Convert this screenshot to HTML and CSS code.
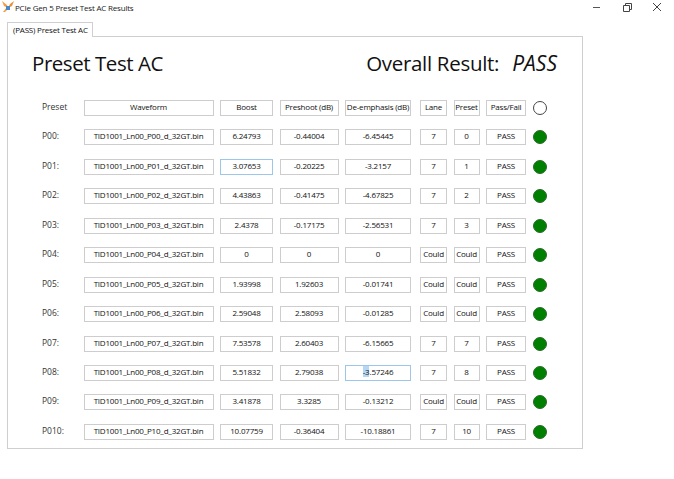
FILE: index.html
```html
<!DOCTYPE html>
<html lang="en">
<head>
  <meta charset="UTF-8" />
  <title>PCIe Gen 5 Preset Test AC Results</title>
  <link rel="stylesheet" href="styles.css">
</head>
<body>
  <div class="titlebar">
    <svg class="app-icon" width="14" height="14" viewBox="0 0 14 14">
      <path d="M1 1 L6 5 L7 8 L3 6 Z" fill="#f0a040"/>
      <path d="M13 1 L9 4 L7 8 L11 6 Z" fill="#e8923a"/>
      <path d="M2 12 L6 7 L7 9 L4 12 Z" fill="#f0a040"/>
      <path d="M5 6 h4 v4 h-4 Z" fill="#4a86c8"/>
    </svg>
    <span class="app-title">PCIe Gen 5 Preset Test AC Results</span>
    <div class="win-btns">
      <svg width="10" height="10" viewBox="0 0 10 10"><path d="M1 5.5 H8" stroke="#555" fill="none"/></svg>
      <svg width="10" height="10" viewBox="0 0 10 10"><path d="M1.5 3.5 H7.5 V9.5 H1.5 Z M3.5 3 V1.5 H9.5 V7.5 H8" stroke="#444" fill="none"/></svg>
      <svg width="10" height="10" viewBox="0 0 10 10"><path d="M1 1 L9 9 M9 1 L1 9" stroke="#444" fill="none"/></svg>
    </div>
  </div>

  <div class="tabs"><div class="tab">(PASS) Preset Test AC</div></div>

  <div class="panel">
    <div class="heading">
      <div class="page-title">Preset Test AC</div>
      <div class="overall">Overall Result: <em>PASS</em></div>
    </div>

    <div class="grid">
      <div class="lbl">Preset</div>
      <div class="box">Waveform</div>
      <div class="box">Boost</div>
      <div class="box">Preshoot (dB)</div>
      <div class="box">De-emphasis (dB)</div>
      <div class="box">Lane</div>
      <div class="box">Preset</div>
      <div class="box">Pass/Fail</div>
      <div class="led off"></div>

      <div class="lbl">P00:</div>
      <div class="box">TID1001_Ln00_P00_d_32GT.bin</div>
      <div class="box">6.24793</div>
      <div class="box">-0.44004</div>
      <div class="box">-6.45445</div>
      <div class="box">7</div>
      <div class="box">0</div>
      <div class="box">PASS</div>
      <div class="led"></div>

      <div class="lbl">P01:</div>
      <div class="box">TID1001_Ln00_P01_d_32GT.bin</div>
      <div class="box focus">3.07653</div>
      <div class="box">-0.20225</div>
      <div class="box">-3.2157</div>
      <div class="box">7</div>
      <div class="box">1</div>
      <div class="box">PASS</div>
      <div class="led"></div>

      <div class="lbl">P02:</div>
      <div class="box">TID1001_Ln00_P02_d_32GT.bin</div>
      <div class="box">4.43863</div>
      <div class="box">-0.41475</div>
      <div class="box">-4.67825</div>
      <div class="box">7</div>
      <div class="box">2</div>
      <div class="box">PASS</div>
      <div class="led"></div>

      <div class="lbl">P03:</div>
      <div class="box">TID1001_Ln00_P03_d_32GT.bin</div>
      <div class="box">2.4378</div>
      <div class="box">-0.17175</div>
      <div class="box">-2.56531</div>
      <div class="box">7</div>
      <div class="box">3</div>
      <div class="box">PASS</div>
      <div class="led"></div>

      <div class="lbl">P04:</div>
      <div class="box">TID1001_Ln00_P04_d_32GT.bin</div>
      <div class="box">0</div>
      <div class="box">0</div>
      <div class="box">0</div>
      <div class="box could">Could not</div>
      <div class="box could">Could not</div>
      <div class="box">PASS</div>
      <div class="led"></div>

      <div class="lbl">P05:</div>
      <div class="box">TID1001_Ln00_P05_d_32GT.bin</div>
      <div class="box">1.93998</div>
      <div class="box">1.92603</div>
      <div class="box">-0.01741</div>
      <div class="box could">Could not</div>
      <div class="box could">Could not</div>
      <div class="box">PASS</div>
      <div class="led"></div>

      <div class="lbl">P06:</div>
      <div class="box">TID1001_Ln00_P06_d_32GT.bin</div>
      <div class="box">2.59048</div>
      <div class="box">2.58093</div>
      <div class="box">-0.01285</div>
      <div class="box could">Could not</div>
      <div class="box could">Could not</div>
      <div class="box">PASS</div>
      <div class="led"></div>

      <div class="lbl">P07:</div>
      <div class="box">TID1001_Ln00_P07_d_32GT.bin</div>
      <div class="box">7.53578</div>
      <div class="box">2.60403</div>
      <div class="box">-6.15665</div>
      <div class="box">7</div>
      <div class="box">7</div>
      <div class="box">PASS</div>
      <div class="led"></div>

      <div class="lbl">P08:</div>
      <div class="box">TID1001_Ln00_P08_d_32GT.bin</div>
      <div class="box">5.51832</div>
      <div class="box">2.79038</div>
      <div class="box focus"><span class="sel">-3</span>.57246</div>
      <div class="box">7</div>
      <div class="box">8</div>
      <div class="box">PASS</div>
      <div class="led"></div>

      <div class="lbl">P09:</div>
      <div class="box">TID1001_Ln00_P09_d_32GT.bin</div>
      <div class="box">3.41878</div>
      <div class="box">3.3285</div>
      <div class="box">-0.13212</div>
      <div class="box could">Could not</div>
      <div class="box could">Could not</div>
      <div class="box">PASS</div>
      <div class="led"></div>

      <div class="lbl">P010:</div>
      <div class="box">TID1001_Ln00_P10_d_32GT.bin</div>
      <div class="box">10.07759</div>
      <div class="box">-0.36404</div>
      <div class="box">-10.18861</div>
      <div class="box">7</div>
      <div class="box">10</div>
      <div class="box">PASS</div>
      <div class="led"></div>
    </div>
  </div>
</body>
</html>
```

FILE: styles.css
```css
body { margin: 0; background: #fff; color: #111; font-family: "Open Sans", "Noto Sans", sans-serif; font-size: 8px; letter-spacing: -0.2px; }

.titlebar { display: flex; align-items: center; height: 14px; padding-left: 1px; }
.app-title { padding-top: 1px; color: #222; }
.win-btns { display: flex; gap: 20px; margin-left: auto; margin-right: 12px; }

.tabs { display: flex; margin: 7px 0 0 7px; }
.tab { height: 14px; padding: 0 4px 0 5px; line-height: 14px; border: 1px solid #cfcfcf; border-bottom: 0; position: relative; top: 1px; background: #fff; }

.panel { width: 574px; height: 411px; margin-left: 7px; border: 1px solid #cfcfcf; }

.heading { display: flex; justify-content: space-between; padding: 9px 25px 0 24px; height: 55px; box-sizing: border-box; font-size: 20.5px; letter-spacing: -0.45px; line-height: 34px; color: #111; }
.overall { letter-spacing: -0.3px; }
.overall em { margin-left: 8px; font-size: 21px; letter-spacing: 0; }

.grid {
  display: grid;
  grid-template-columns: 35px 130px 53px 59px 66px 29.5px 26px 40px 14px;
  grid-auto-rows: 16px;
  row-gap: 13.45px;
  column-gap: 6.5px;
  padding: 8px 0 0 34px;
  align-items: center;
}

/* lane column sits a little further from de-emphasis */
.grid > :nth-child(9n+6) { margin-left: 2.5px; }

.lbl { line-height: 13px; height: 16px; font-size: 8.5px; letter-spacing: 0; color: #333; }
.box { height: 16px; box-sizing: border-box; border: 1px solid #cdcdcd; text-align: center; line-height: 11px; overflow: hidden; }
.box.focus { border-color: #9ec5ea; }
.sel { background: #b5d7f5; }

/* text wraps in the narrow boxes, only the top of the t on line two shows */
.box.could { padding-top: 1px; line-height: 10px; }

.led { width: 14px; height: 14px; box-sizing: border-box; border-radius: 50%; background: #008000; border: 1px solid #2a6a2a; }
.led.off { background: #fff; border-color: #444; }
```
